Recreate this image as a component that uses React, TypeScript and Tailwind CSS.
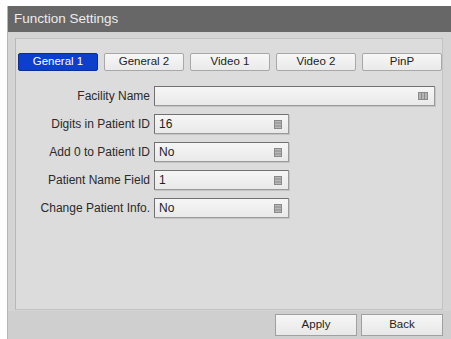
import React from "react";

const font = { fontFamily: '"Liberation Sans", Arial, sans-serif' };

function Icon() {
  return (
    <svg width="8" height="9" viewBox="0 0 8 9" className="shrink-0">
      <rect x="0.5" y="0.5" width="7" height="8" fill="#b8b8b8" stroke="#8a8a8a" />
      <line x1="1" y1="3" x2="7" y2="3" stroke="#8a8a8a" />
      <line x1="1" y1="6" x2="7" y2="6" stroke="#8a8a8a" />
    </svg>
  );
}

function Field({ label, value, wide }: { label: string; value: string; wide?: boolean }) {
  return (
    <div className="flex items-center h-[20px]">
      <div className="w-[136px] text-right pr-[4px] text-[12px] text-[#2a2a2a] whitespace-nowrap">{label}</div>
      <div
        className={`${wide ? "w-[281px]" : "w-[135px]"} h-[20px] flex items-center justify-between pl-[4px] pr-[6px] bg-gradient-to-b from-[#f6f6f6] to-[#e9e9e9] border border-[#9a9a9a] border-t-[#707070] border-l-[#707070] shadow-[1px_1px_0_#c4c4c4] text-[12px] text-[#222]`}
      >
        <span>{value}</span>
        {wide ? (
          <svg width="10" height="8" viewBox="0 0 10 8" className="shrink-0">
            <rect x="0.5" y="0.5" width="9" height="7" fill="#b5b5b5" stroke="#8a8a8a" />
            <line x1="3.5" y1="1" x2="3.5" y2="7" stroke="#8a8a8a" />
            <line x1="6.5" y1="1" x2="6.5" y2="7" stroke="#8a8a8a" />
          </svg>
        ) : (
          <Icon />
        )}
      </div>
    </div>
  );
}

function Tab({ label, active }: { label: string; active?: boolean }) {
  return (
    <div
      className={
        active
          ? "w-[80px] h-[18px] flex items-center justify-center text-[11.5px] text-white bg-[#0b3fcc] border border-[#0a2f9a] rounded-[2px]"
          : "w-[80px] h-[18px] flex items-center justify-center text-[11.5px] text-[#222] bg-gradient-to-b from-[#f7f7f7] to-[#eaeaea] border border-[#a8a8a8] rounded-[2px]"
      }
    >
      {label}
    </div>
  );
}

function Btn({ label }: { label: string }) {
  return (
    <div className="w-[82px] h-[22px] flex items-center justify-center text-[11.5px] text-[#222] bg-gradient-to-b from-[#f6f6f6] to-[#e8e8e8] border border-[#a0a0a0]">
      {label}
    </div>
  );
}

export default function App() {
  return (
    <div className="w-[451px] h-[339px] bg-white pt-[6px] pl-[7px] overflow-hidden" style={font}>
      <div className="flex flex-col h-full bg-[#d4d4d4] border-l border-[#b5b5b5]">
        <div className="h-[26px] shrink-0 bg-[#676767] flex items-center pl-[6px] text-[13.5px] text-[#ececec]">
          Function Settings
        </div>
        <div className="flex-1 pl-[7px] pr-[8px] pt-[6px]">
          <div className="h-[272px] bg-[#dcdcdc] border border-[#c3c3c3] border-l-[#b8b8b8] pl-[2px] pt-[14px]">
            <div className="flex gap-[6px]">
              <Tab label="General 1" active />
              <Tab label="General 2" />
              <Tab label="Video 1" />
              <Tab label="Video 2" />
              <Tab label="PinP" />
            </div>
            <div className="flex flex-col gap-[8px] mt-[15px]">
              <Field label="Facility Name" value="" wide />
              <Field label="Digits in Patient ID" value="16" />
              <Field label="Add 0 to Patient ID" value="No" />
              <Field label="Patient Name Field" value="1" />
              <Field label="Change Patient Info." value="No" />
            </div>
          </div>
        </div>
        <div className="h-[28px] shrink-0 bg-[#cfcfcf] flex items-start justify-end gap-[4px] pr-[8px] pt-[3px]">
          <Btn label="Apply" />
          <Btn label="Back" />
        </div>
      </div>
    </div>
  );
}
